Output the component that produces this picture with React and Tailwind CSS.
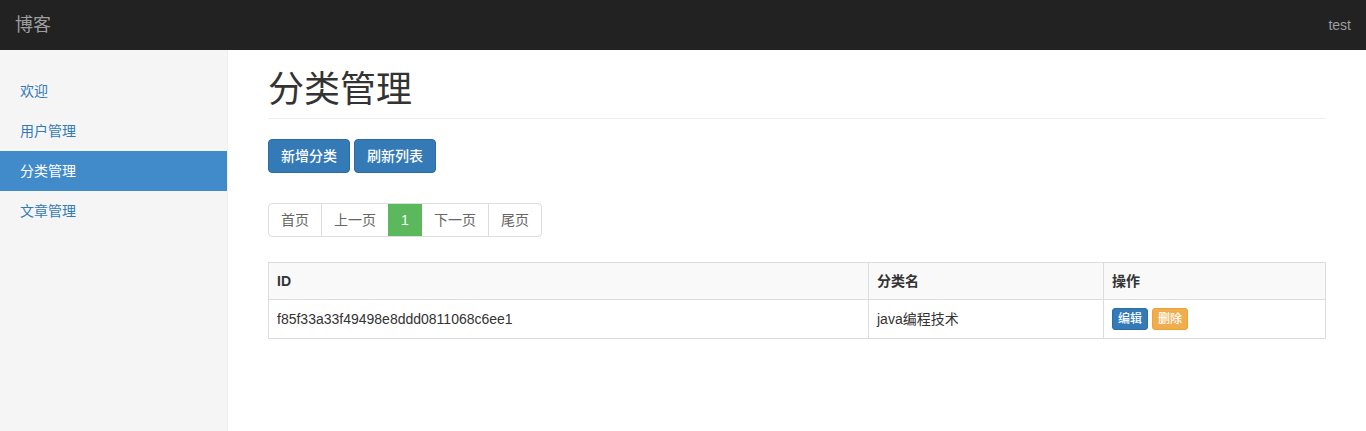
import React from "react";

const navItems = ["欢迎", "用户管理", "分类管理", "文章管理"];

export default function App() {
  return (
    <div
      className="w-[1366px] h-[431px] bg-white text-[14px] leading-[20px] text-[#333] flex flex-col overflow-hidden font-['Liberation_Sans','Noto_Sans_CJK_SC',sans-serif]"
    >
      {/* top navbar */}
      <div className="h-[50px] bg-[#222] flex items-center justify-between px-[15px] shrink-0">
        <span className="text-[18px] text-[#9d9d9d]">博客</span>
        <span className="text-[14px] text-[#9d9d9d]">test</span>
      </div>

      <div className="flex flex-1 min-h-0">
        {/* sidebar */}
        <div className="w-[228px] shrink-0 bg-[#f5f5f5] border-r border-[#eee] pt-[21px]">
          {navItems.map((item) => (
            <div
              key={item}
              className={
                item === "分类管理"
                  ? "h-[40px] px-[20px] flex items-center bg-[#428bca] text-white"
                  : "h-[40px] px-[20px] flex items-center text-[#337ab7]"
              }
            >
              {item}
            </div>
          ))}
        </div>

        {/* main */}
        <div className="flex-1 pl-[40px] pr-[40px] pt-[20px]">
          <div className="border-b border-[#eee] pb-[8px]">
            <h1 className="text-[36px] leading-[40px] font-normal text-[#333]">分类管理</h1>
          </div>

          <div className="mt-[20px] flex gap-[4px]">
            <button className="h-[34px] px-[12px] bg-[#337ab7] border border-[#2e6da4] rounded-[4px] text-white text-[14px] font-medium">
              新增分类
            </button>
            <button className="h-[34px] px-[12px] bg-[#337ab7] border border-[#2e6da4] rounded-[4px] text-white text-[14px] font-medium">
              刷新列表
            </button>
          </div>

          <div className="mt-[30px] flex">
            <div className="flex border border-[#ddd] rounded-[4px] overflow-hidden h-[34px] text-[#666]">
              <span className="w-[52px] flex items-center justify-center">首页</span>
              <span className="w-[67px] flex items-center justify-center border-l border-[#ddd]">上一页</span>
              <span className="w-[34px] flex items-center justify-center bg-[#5cb85c] text-white">1</span>
              <span className="w-[66px] flex items-center justify-center">下一页</span>
              <span className="w-[53px] flex items-center justify-center border-l border-[#ddd]">尾页</span>
            </div>
          </div>

          <table className="mt-[25px] w-full border-collapse border border-[#ddd]">
            <thead>
              <tr className="bg-[#f9f9f9] h-[37px]">
                <th className="w-[600px] border border-[#ddd] px-[8px] text-left font-bold">ID</th>
                <th className="w-[235px] border border-[#ddd] px-[8px] text-left font-bold">分类名</th>
                <th className="border border-[#ddd] px-[8px] text-left font-bold">操作</th>
              </tr>
            </thead>
            <tbody>
              <tr className="h-[39px]">
                <td className="border border-[#ddd] px-[8px]">f85f33a33f49498e8ddd0811068c6ee1</td>
                <td className="border border-[#ddd] px-[8px]">java编程技术</td>
                <td className="border border-[#ddd] px-[8px]">
                  <div className="flex gap-[4px]">
                    <span className="h-[22px] px-[5px] flex items-center bg-[#337ab7] border border-[#2e6da4] rounded-[3px] text-white text-[12px] font-medium">
                      编辑
                    </span>
                    <span className="h-[22px] px-[5px] flex items-center bg-[#f0ad4e] border border-[#eea236] rounded-[3px] text-white text-[12px] font-medium">
                      删除
                    </span>
                  </div>
                </td>
              </tr>
            </tbody>
          </table>
        </div>
      </div>
    </div>
  );
}
